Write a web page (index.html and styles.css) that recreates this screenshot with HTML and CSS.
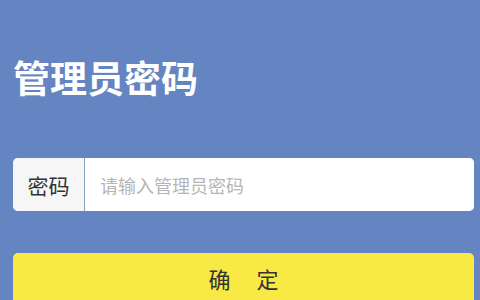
FILE: index.html
```html
<!DOCTYPE html>
<html lang="zh">
<head>
  <meta charset="utf-8">
  <title>管理员密码</title>
  <link rel="stylesheet" href="styles.css">
</head>
<body>
  <div class="page">
    <h1 class="title">管理员密码</h1>
    <form class="pwd-form">
      <div class="field">
        <label class="field-label" for="pwd">密码</label>
        <input class="field-input" id="pwd" type="password" placeholder="请输入管理员密码">
      </div>
      <button class="btn-ok" type="submit">确&emsp;定</button>
    </form>
  </div>
</body>
</html>
```

FILE: styles.css
```css
html, body {
  margin: 0;
  height: 100%;
}
body {
  font-family: "Noto Sans CJK SC", "Noto Sans", sans-serif;
  background-color: #6584c2;
  overflow: hidden;
}
.page {
  padding: 0 6px 0 13px;
}
.title {
  margin: 0;
  padding-top: 52px;
  height: 56px;
  line-height: 50px;
  font-size: 37px;
  font-weight: bold;
  color: #fff;
}
.pwd-form {
  margin-top: 50px;
  display: flex;
  flex-direction: column;
}
.field {
  display: flex;
  height: 53px;
  background: #fff;
  border-radius: 5px;
  overflow: hidden;
}
.field-label {
  width: 71px;
  flex: none;
  display: flex;
  align-items: center;
  justify-content: center;
  font-size: 21px;
  color: #333;
  background: #f6f6f6;
  border-right: 1px solid #8a9fcf;
}
.field-input {
  flex: 1;
  border: none;
  outline: none;
  padding: 0 0 0 15px;
  font-family: inherit;
  font-size: 18px;
  color: #333;
  background: #fff;
}
.field-input::placeholder {
  color: #b5b5b5;
}
.btn-ok {
  margin-top: 42px;
  height: 56px;
  border: none;
  border-radius: 5px;
  background: #f8e944;
  font-family: inherit;
  font-size: 22px;
  letter-spacing: 2px;
  color: #333;
  padding: 0 0 6px 2px;
}
```
